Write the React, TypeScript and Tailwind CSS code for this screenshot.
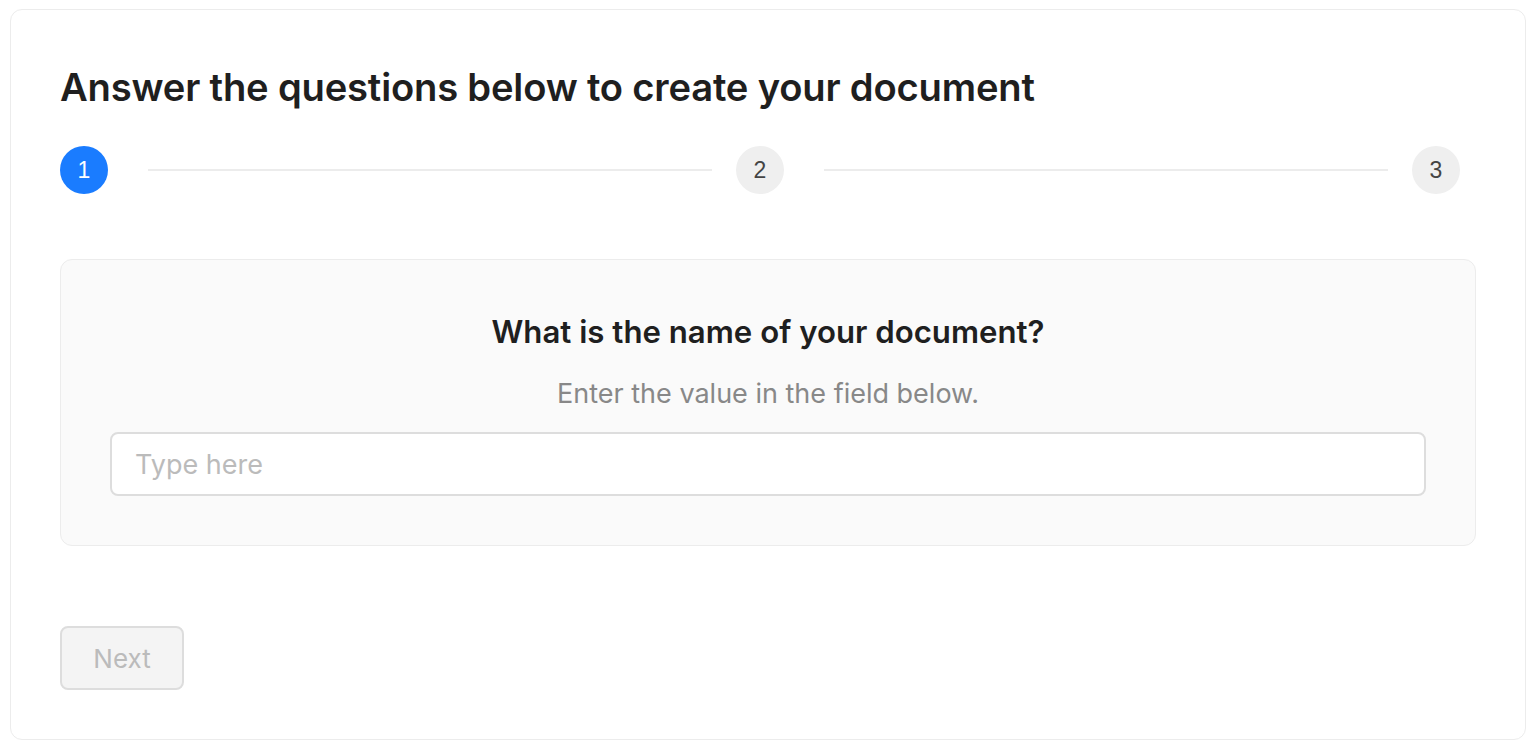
export default function App() {
  const font = { fontFamily: 'Inter, "Noto Sans", sans-serif' };
  const numFont = { fontFamily: '"Liberation Sans", Arial, sans-serif' };
  return (
    <div className="w-[1536px] h-[748px] bg-white px-[10px] pt-[9px]" style={font}>
      <div className="h-[731px] rounded-[12px] border border-[#ececec] bg-white px-[49px] pt-[49px]">
        <h1 className="text-[38.2px] leading-[56px] font-semibold text-[#1f1f1f] tracking-[-0.2px]">
          Answer the questions below to create your document
        </h1>
        <div className="mt-[31px] flex items-center pr-[16px]">
          <div className="w-[48px] h-[48px] rounded-full bg-[#1a7cff] text-white flex items-center justify-center text-[23px] shrink-0" style={numFont}>1</div>
          <div className="flex-1 h-[2px] bg-[#ececec] ml-[40px] mr-[24px]" />
          <div className="w-[48px] h-[48px] rounded-full bg-[#efefef] text-[#444] flex items-center justify-center text-[23px] shrink-0" style={numFont}>2</div>
          <div className="flex-1 h-[2px] bg-[#ececec] ml-[40px] mr-[24px]" />
          <div className="w-[48px] h-[48px] rounded-full bg-[#efefef] text-[#444] flex items-center justify-center text-[23px] shrink-0" style={numFont}>3</div>
        </div>
        <div className="mt-[65px] h-[287px] rounded-[12px] border border-[#ececec] bg-[#fafafa] px-[49px] pt-[48px]">
          <h2 className="text-center text-[31.2px] leading-[48px] font-semibold text-[#1f1f1f]">
            What is the name of your document?
          </h2>
          <p className="mt-[20px] text-center text-[27px] leading-[36px] text-[#888888]">
            Enter the value in the field below.
          </p>
          <input
            type="text"
            placeholder="Type here"
            className="mt-[20px] block w-full h-[64px] rounded-[8px] border-2 border-[#dddddd] bg-white px-[23px] text-[27px] text-[#222] placeholder:text-[#bbbbbb] outline-none"
            style={font}
          />
        </div>
        <button
          className="mt-[80px] w-[124px] h-[64px] rounded-[8px] border-2 border-[#dddddd] bg-[#f4f4f4] text-[26px] text-[#bbbbbb]"
          style={font}
        >
          Next
        </button>
      </div>
    </div>
  );
}
